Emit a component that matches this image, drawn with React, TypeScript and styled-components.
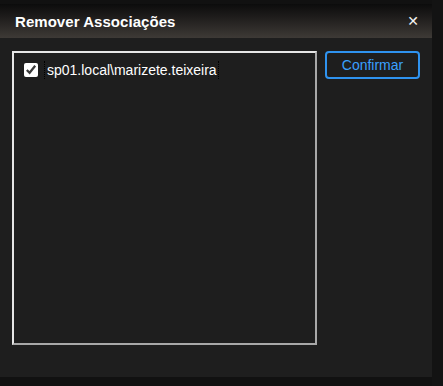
import React, { useState } from 'react'
import styled, { createGlobalStyle } from 'styled-components'

const GlobalStyle = createGlobalStyle`
  html, body {
    margin: 0;
    padding: 0;
    background: #111111;
    font-family: "Liberation Sans", Arial, sans-serif;
  }
  * { box-sizing: border-box; }
`

const Page = styled.div`
  padding-top: 4px;
  width: 443px;
  height: 386px;
  background: linear-gradient(to right, transparent 432px, #131313 432px);
`

const Dialog = styled.div`
  width: 432px;
  height: 373px;
  background: #1e1e1e;
  display: flex;
  flex-direction: column;
`

const Header = styled.div`
  height: 34px;
  flex: none;
  display: flex;
  align-items: center;
  justify-content: space-between;
  padding: 0 13px 0 15px;
  background: linear-gradient(to bottom, #0c0c0c 0%, #1f1d1c 40%, #3e3a36 100%);
`

const Title = styled.h1`
  margin: 0;
  font-size: 15px;
  font-weight: bold;
  color: #ffffff;
  letter-spacing: 0.05px;
`

const Close = styled.button`
  background: none;
  border: none;
  padding: 0;
  color: #f2f2f2;
  font-family: "DejaVu Sans", sans-serif;
  font-size: 14px;
  font-weight: bold;
  line-height: 1;
  cursor: pointer;
`

const Body = styled.div`
  display: flex;
  align-items: flex-start;
  gap: 8px;
  padding: 13px 12px 0 12px;
`

const ListBox = styled.div`
  width: 305px;
  height: 294px;
  border-style: solid;
  border-width: 2px;
  border-color: #e6e6e6 #a8a8a8 #a8a8a8 #e6e6e6;
  padding: 8px 10px;
`

const Item = styled.label`
  display: flex;
  align-items: center;
  gap: 6px;
  color: #ffffff;
  font-size: 14px;
`

const Check = styled.input`
  width: 14px;
  height: 14px;
  margin: 0;
  accent-color: #ffffff;
`

const ItemText = styled.span`
  border-left: 1px dotted #000;
  border-right: 1px dotted #000;
  padding: 1px 1px 1px 2px;
  line-height: 16px;
`

const ConfirmButton = styled.button`
  width: 95px;
  height: 28px;
  background: transparent;
  border: 2px solid #2f93ef;
  border-radius: 4px;
  color: #3aa0ff;
  font-family: "Liberation Sans", Arial, sans-serif;
  font-size: 14px;
  padding: 0;
  cursor: pointer;
`

export default function App() {
  const [checked, setChecked] = useState(true)

  return <Page>
    <GlobalStyle />
    <Dialog>
      <Header>
        <Title>Remover Associações</Title>
        <Close aria-label="Fechar">✕</Close>
      </Header>
      <Body>
        <ListBox>
          <Item>
            <Check type="checkbox" checked={checked} onChange={() => setChecked(!checked)} />
            <ItemText>sp01.local\marizete.teixeira</ItemText>
          </Item>
        </ListBox>
        <ConfirmButton>Confirmar</ConfirmButton>
      </Body>
    </Dialog>
  </Page>
}
